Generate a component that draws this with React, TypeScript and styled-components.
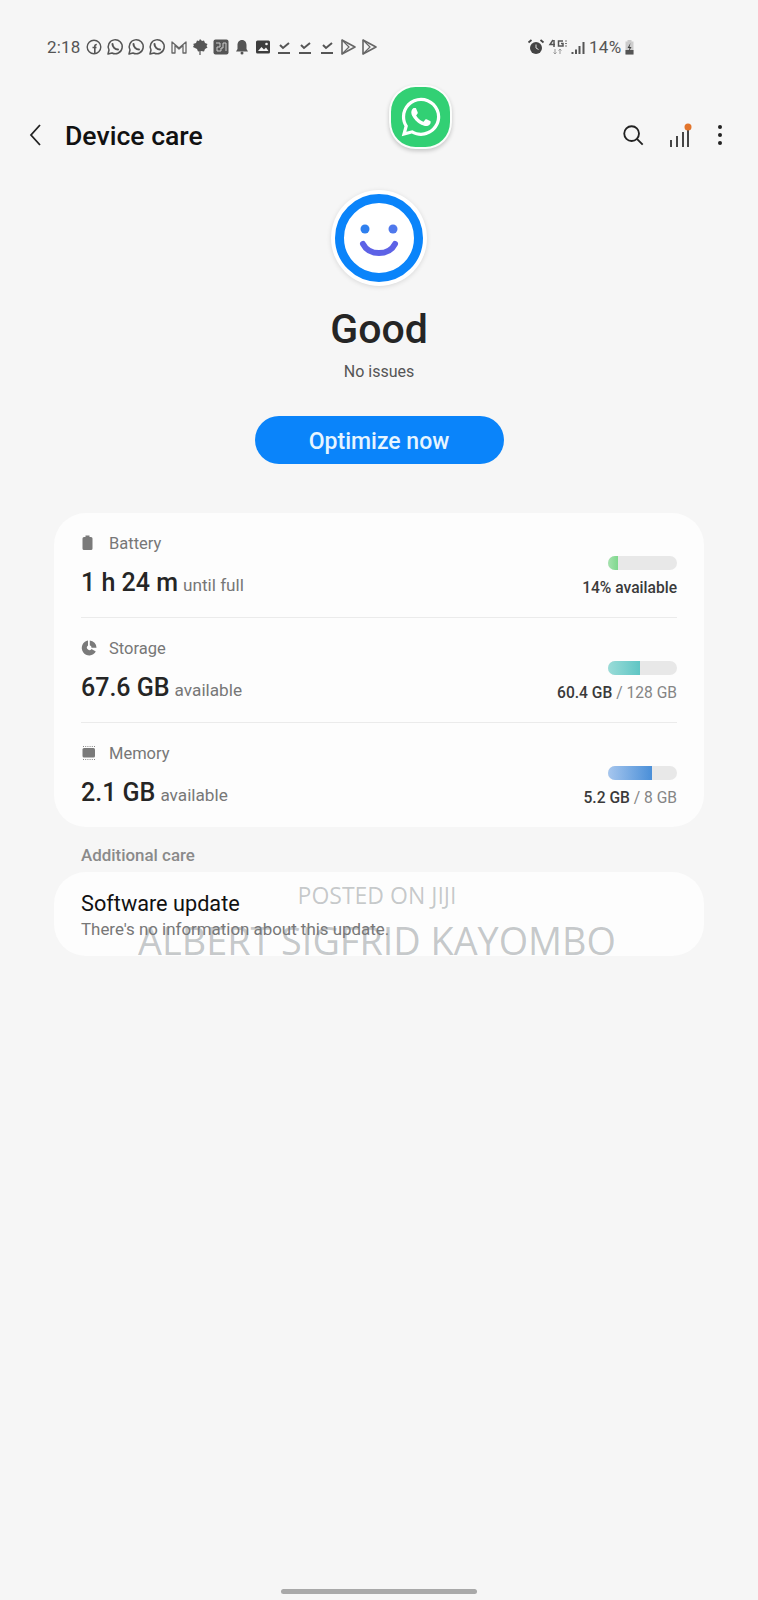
import React from 'react';
import styled, { createGlobalStyle } from 'styled-components';
import { FaWhatsapp } from 'react-icons/fa';

const GlobalStyle = createGlobalStyle`
  html, body {
    margin: 0;
    padding: 0;
    background: #f6f6f6;
  }
  * {
    box-sizing: border-box;
  }
`;

const Screen = styled.div`
  position: relative;
  width: 758px;
  height: 1600px;
  overflow: hidden;
  background: #f6f6f6;
  font-family: Roboto, "Liberation Sans", sans-serif;
  color: #252525;
  display: flex;
  flex-direction: column;
`;

const StatusBar = styled.div`
  height: 24px;
  margin-top: 35px;
  padding: 0 0 0 47px;
  display: flex;
  align-items: center;
  color: #555;
`;

const Clock = styled.span`
  font-size: 17px;
  width: 38px;
  letter-spacing: 0.2px;
`;

const NotifIcons = styled.div`
  display: flex;
  gap: 3.15px;
  width: 442px;
`;

const RightStatus = styled.div`
  display: flex;
  align-items: center;
  gap: 3px;
`;

const BatteryText = styled.span`
  font-size: 17px;
  letter-spacing: 0.3px;
  color: #555;
`;

const Header = styled.header`
  height: 56px;
  margin-top: 48px;
  padding: 0 32px 0 27px;
  display: flex;
  align-items: center;
`;

const Title = styled.h1`
  margin: 0 0 0 20px;
  font-size: 26.6px;
  font-weight: 500;
  color: #111;
  flex: 1;
`;

const HeaderActions = styled.div`
  display: flex;
  align-items: center;
  gap: 22px;
`;

const SearchSlot = styled.span`
  display: flex;
  margin-right: 1px;
`;

const FloatingApp = styled.div`
  position: absolute;
  left: 389px;
  top: 85px;
  width: 63px;
  height: 64px;
  border-radius: 42%;
  background: #32d074;
  border: 2px solid #fbfdfb;
  box-shadow: 0 2px 4px rgba(0, 0, 0, 0.2);
  display: flex;
  align-items: center;
  justify-content: center;
  color: #fff;
`;

const Summary = styled.section`
  margin-top: 27px;
  display: flex;
  flex-direction: column;
  align-items: center;
`;

const FaceBadge = styled.div`
  width: 96px;
  height: 96px;
  border-radius: 50%;
  background: #fff;
  box-shadow: 0 1px 5px rgba(0, 0, 0, 0.12);
  display: flex;
  align-items: center;
  justify-content: center;
`;

const Status = styled.div`
  margin-top: 19px;
  font-size: 41px;
  line-height: 48px;
  font-weight: 500;
  color: #252525;
`;

const StatusNote = styled.div`
  margin-top: 9px;
  font-size: 16px;
  line-height: 20px;
  color: #555;
`;

const OptimizeButton = styled.button`
  margin-top: 34px;
  width: 249px;
  height: 48px;
  padding: 2px 0 0;
  border: none;
  border-radius: 24px;
  background: #0a84fa;
  color: #e6f5ff;
  font-family: inherit;
  font-size: 23px;
  font-weight: 500;
`;

const Card = styled.section`
  margin: 0 54px;
  padding: 0 27px;
  background: #fdfdfd;
  border-radius: 32px;
`;

const MetricsCard = styled(Card)`
  margin-top: 49px;
  height: 314px;
`;

const MetricRow = styled.div<{ $last?: boolean }>`
  height: 105px;
  padding-top: 18px;
  display: flex;
  justify-content: space-between;
  border-bottom: ${(p) => (p.$last ? 'none' : '1px solid #ebebeb')};
`;

const MetricInfo = styled.div`
  display: flex;
  flex-direction: column;
`;

const MetricLabel = styled.div`
  display: flex;
  align-items: center;
  height: 24px;
  font-size: 16.5px;
  color: #777;
`;

const LabelIcon = styled.span`
  width: 28px;
  display: flex;
`;

const MetricValue = styled.div`
  margin-top: 11px;
  display: flex;
  align-items: baseline;
  gap: 5px;
`;

const BigValue = styled.span`
  font-size: 25px;
  line-height: 34px;
  font-weight: 500;
  color: #252525;
`;

const ValueNote = styled.span`
  font-size: 17.2px;
  color: #777;
`;

const MetricUsage = styled.div`
  padding-top: 25px;
  display: flex;
  flex-direction: column;
  align-items: flex-end;
`;

const Bar = styled.div`
  width: 69px;
  height: 14px;
  border-radius: 7px;
  background: #e8e8e8;
  overflow: hidden;
`;

const BarFill = styled.div<{ $from: string; $to: string }>`
  height: 100%;
  background: linear-gradient(90deg, ${(p) => p.$from}, ${(p) => p.$to});
`;

const UsageText = styled.div`
  margin-top: 8px;
  font-size: 15.6px;
  line-height: 20px;
  font-weight: 500;
  color: #3a3a3a;
`;

const UsageTotal = styled.span`
  font-weight: 400;
  color: #858585;
`;

const SectionLabel = styled.div`
  margin: 18px 0 0 81px;
  height: 20px;
  font-size: 16.9px;
  line-height: 20px;
  font-weight: 500;
  color: #8a8a8a;
`;

const UpdateCard = styled(Card)`
  margin-top: 7px;
  height: 84px;
  padding-top: 19px;
`;

const UpdateTitle = styled.div`
  font-size: 21.7px;
  line-height: 26px;
  color: #111;
`;

const UpdateNote = styled.div`
  margin-top: 2px;
  font-size: 16.9px;
  line-height: 20px;
  color: #777;
`;

const Watermark = styled.div`
  position: absolute;
  left: 0;
  right: 4px;
  top: 882px;
  display: flex;
  flex-direction: column;
  align-items: center;
  font-family: "Open Sans", sans-serif;
  color: rgba(120, 125, 130, 0.42);
  pointer-events: none;
`;

const WatermarkSmall = styled.div`
  font-size: 23px;
  line-height: 27px;
`;

const WatermarkLarge = styled.div`
  margin-top: 7px;
  font-size: 37.8px;
  line-height: 50px;
`;

const HomeBar = styled.div`
  position: absolute;
  left: 281px;
  top: 1589px;
  width: 196px;
  height: 5px;
  border-radius: 3px;
  background: #a9a9a9;
`;

const Glyph: React.FC<{ children: React.ReactNode; w?: number; h?: number; vb?: string }> = ({
  children,
  w = 18,
  h = 18,
  vb = '0 0 18 18',
}) => (
  <svg width={w} height={h} viewBox={vb} fill="none">
    {children}
  </svg>
);

const WhatsGlyph = () => (
  <Glyph>
    <path
      d="M2 16l1-4a7 7 0 1 1 3 3z"
      stroke="#555"
      strokeWidth="1.5"
      strokeLinejoin="round"
    />
    <path d="M6.5 6c0 3 2.5 5.5 5.5 5.5" stroke="#555" strokeWidth="2" strokeLinecap="round" />
  </Glyph>
);

const CheckGlyph = () => (
  <Glyph>
    <path d="M5 7l3 3 6-5" stroke="#555" strokeWidth="2" />
    <path d="M3 15h12" stroke="#555" strokeWidth="2" />
  </Glyph>
);

const PlayGlyph = () => (
  <Glyph>
    <path d="M3 2l13 7-13 7z" stroke="#666" strokeWidth="1.6" strokeLinejoin="round" />
    <path d="M3 2l7 7-7 7" stroke="#666" strokeWidth="1.2" />
  </Glyph>
);

const NotificationIcons = () => (
  <NotifIcons>
    <Glyph>
      <circle cx="9" cy="9" r="6.8" stroke="#555" strokeWidth="1.4" />
      <path d="M9.8 15V8.500c0-1.500.6-2 2-2M7.500 9.500h4" stroke="#555" strokeWidth="1.6" />
    </Glyph>
    <WhatsGlyph />
    <WhatsGlyph />
    <WhatsGlyph />
    <Glyph>
      <path d="M2 15V4l7 6 7-6v11h-3V7.500L9 11 5 7.500V15z" stroke="#666" strokeWidth="1.3" strokeLinejoin="round" />
    </Glyph>
    <Glyph>
      <path d="M9 1l2 2 2-.5 1 2.500 2.500 1-1 2 1 1.500-2.500 1.500-1 2.500-3-.5-3 .5-1-2.500L2 9l1-2-1-1 3-1 1-2.500 2 .5z" fill="#555" />
      <path d="M9 12v5" stroke="#555" strokeWidth="1.2" />
    </Glyph>
    <Glyph>
      <rect x="1.5" y="1.5" width="15" height="15" rx="2" fill="#555" />
      <path d="M4 5h4v4H5v4h4v-3h2V5h3v8" stroke="#ccc" strokeWidth="1" />
    </Glyph>
    <Glyph>
      <path d="M9 2c-3 0-4.500 2.500-4.500 5v4L3 13.500h12L13.500 11V7c0-2.500-1.500-5-4.500-5z" fill="#555" />
      <circle cx="9" cy="15" r="1.5" fill="#555" />
    </Glyph>
    <Glyph>
      <rect x="2" y="2.5" width="14" height="13" rx="1.5" fill="#3d3d3d" />
      <path d="M4 13l3.500-4 2.500 2.500 2-2 2.500 3.500z" fill="#f4f4f4" />
      <circle cx="12.5" cy="6" r="1.3" fill="#f4f4f4" />
    </Glyph>
    <CheckGlyph />
    <CheckGlyph />
    <CheckGlyph />
    <PlayGlyph />
    <PlayGlyph />
  </NotifIcons>
);

const SystemIcons = () => (
  <RightStatus>
    <Glyph>
      <circle cx="9" cy="10" r="6" fill="#444" />
      <path d="M9 6.500V10l2.500 1.500" stroke="#ddd" strokeWidth="1" />
      <path d="M1.500 4.500l3-2.500M16.500 4.500l-3-2.500" stroke="#444" strokeWidth="1.8" />
    </Glyph>
    <Glyph w={20} h={18} vb="0 0 20 18">
      <path d="M5 2L2 6.500h5M6 2v7" stroke="#555" strokeWidth="1.5" />
      <path d="M15 3h-4.500v5H15V5.500h-2" stroke="#555" strokeWidth="1.5" />
      <path d="M17 3h2M17 5.500h2M17 8h2" stroke="#777" strokeWidth="1" />
      <path d="M7 11v5M5.500 14.500L7 16l1.500-1.500M12 16v-5M10.500 12.500L12 11l1.500 1.500" stroke="#999" strokeWidth="1" />
    </Glyph>
    <Glyph w={15} h={18} vb="0 0 15 18">
      <path d="M1.500 14v2M5 11.500V16M8.500 8v8M12.500 4v12" stroke="#555" strokeWidth="2" />
    </Glyph>
    <BatteryText>14%</BatteryText>
    <Glyph w={11} h={18} vb="0 0 11 18">
      <path d="M3.500 2h4v1.500h2v13h-8v-13h2z" fill="#ccc" />
      <path d="M1.500 12h8v4.500h-8z" fill="#555" />
      <path d="M6.500 5L3.500 10h2l-1 4 3-5h-2z" fill="#444" />
    </Glyph>
  </RightStatus>
);

const metrics = [
  {
    label: 'Battery',
    icon: (
      <Glyph w={14} h={16} vb="0 0 14 16">
        <path d="M4.500 0.500h4v1.500h1.500a1.500 1.500 0 0 1 1.500 1.500v10a1.500 1.500 0 0 1-1.500 1.500H3a1.500 1.500 0 0 1-1.500-1.500v-10A1.500 1.500 0 0 1 3 2h1.500z" fill="#7a7a7a" />
      </Glyph>
    ),
    value: '1 h 24 m',
    note: 'until full',
    fill: 14,
    from: '#a5e2ae',
    to: '#7fd88d',
    used: '14% available',
    total: '',
  },
  {
    label: 'Storage',
    icon: (
      <Glyph w={16} h={16} vb="0 0 16 16">
        <path d="M7 .5v5a2.500 2.500 0 1 0 3.500 3.500l4.300 2.600A7.500 7.500 0 1 1 7 .5z" fill="#7a7a7a" />
        <path d="M8.800.5a7.300 7.300 0 0 1 6.700 7.200l-5 .1a2.500 2.500 0 0 0-1.700-2.600z" fill="#7a7a7a" />
      </Glyph>
    ),
    value: '67.6 GB',
    note: 'available',
    fill: 47,
    from: '#9adcd8',
    to: '#5fc5c4',
    used: '60.4 GB',
    total: ' / 128 GB',
  },
  {
    label: 'Memory',
    icon: (
      <Glyph w={16} h={16} vb="0 0 16 16">
        <rect x="1.5" y="3" width="12.5" height="9.5" rx="1.5" fill="#7a7a7a" />
        <path d="M2 1.500h12M2 14.500h12" stroke="#8a8a8a" strokeWidth="1" strokeDasharray="1 1.2" />
      </Glyph>
    ),
    value: '2.1 GB',
    note: 'available',
    fill: 64,
    from: '#a6c6ee',
    to: '#4a8fd8',
    used: '5.2 GB',
    total: ' / 8 GB',
  },
];

export default function App() {
  return (
    <Screen>
      <GlobalStyle />
      <StatusBar>
        <Clock>2:18</Clock>
        <NotificationIcons />
        <SystemIcons />
      </StatusBar>

      <Header>
        <svg width="18" height="24" viewBox="0 0 18 24" fill="none">
          <path d="M13 2L4 12l9 10" stroke="#222" strokeWidth="1.8" />
        </svg>
        <Title>Device care</Title>
        <HeaderActions>
          <SearchSlot>
            <svg width="24" height="24" viewBox="0 0 26 26" fill="none">
              <circle cx="11.5" cy="11.5" r="8" stroke="#222" strokeWidth="2" />
              <path d="M17.500 17.500l6 6" stroke="#222" strokeWidth="2" />
            </svg>
          </SearchSlot>
          <svg width="24" height="26" viewBox="0 0 24 26" fill="none">
            <path d="M3 18v7M9 14v11M15 10v15M20 6v19" stroke="#333" strokeWidth="1.8" />
            <circle cx="20" cy="5" r="3.5" fill="#e2752c" />
          </svg>
          <svg width="12" height="26" viewBox="0 0 12 26" fill="none">
            <circle cx="6" cy="5" r="2" fill="#222" />
            <circle cx="6" cy="13" r="2" fill="#222" />
            <circle cx="6" cy="21" r="2" fill="#222" />
          </svg>
        </HeaderActions>
      </Header>

      <FloatingApp>
        <FaWhatsapp size={44} />
      </FloatingApp>

      <Summary>
        <FaceBadge>
          <svg width="88" height="88" viewBox="0 0 88 88" fill="none">
            <circle cx="44" cy="44" r="39.5" stroke="#0a84fa" strokeWidth="9" />
            <circle cx="30" cy="35" r="4.5" fill="#2f80ef" />
            <circle cx="58" cy="35" r="4.5" fill="#4f78ec" />
            <path d="M28 50c3 6 9 9 16 9s13-3 16-9" stroke="#5d62e6" strokeWidth="6" strokeLinecap="round" />
          </svg>
        </FaceBadge>
        <Status>Good</Status>
        <StatusNote>No issues</StatusNote>
        <OptimizeButton>Optimize now</OptimizeButton>
      </Summary>

      <MetricsCard>
        {metrics.map((m, i) => (
          <MetricRow key={m.label} $last={i === metrics.length - 1}>
            <MetricInfo>
              <MetricLabel>
                <LabelIcon>{m.icon}</LabelIcon>
                {m.label}
              </MetricLabel>
              <MetricValue>
                <BigValue>{m.value}</BigValue>
                <ValueNote>{m.note}</ValueNote>
              </MetricValue>
            </MetricInfo>
            <MetricUsage>
              <Bar>
                <BarFill $from={m.from} $to={m.to} style={{ width: `${m.fill}%` }} />
              </Bar>
              <UsageText>
                {m.used}
                <UsageTotal>{m.total}</UsageTotal>
              </UsageText>
            </MetricUsage>
          </MetricRow>
        ))}
      </MetricsCard>

      <SectionLabel>Additional care</SectionLabel>
      <UpdateCard>
        <UpdateTitle>Software update</UpdateTitle>
        <UpdateNote>There's no information about this update.</UpdateNote>
      </UpdateCard>

      <Watermark>
        <WatermarkSmall>POSTED ON JIJI</WatermarkSmall>
        <WatermarkLarge>ALBERT SIGFRID KAYOMBO</WatermarkLarge>
      </Watermark>

      <HomeBar />
    </Screen>
  );
}
